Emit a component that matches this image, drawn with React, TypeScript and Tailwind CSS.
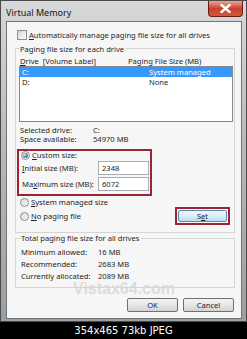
import React from "react";

const ui = "font-['Noto_Sans',sans-serif] text-[7.6px] leading-[9px] text-[#1e1e1e]";

function Radio({ checked }: { checked?: boolean }) {
  return (
    <span className="flex h-[9px] w-[9px] shrink-0 items-center justify-center rounded-full border border-[#8d8d8d] bg-gradient-to-br from-[#d9d9d9] to-[#fbfbfb]">
      {checked && (
        <span className="h-[5px] w-[5px] rounded-full bg-[radial-gradient(circle_at_35%_35%,#c4e6f7,#2d6f96_70%)]" />
      )}
    </span>
  );
}

function Field({ value }: { value: string }) {
  return (
    <div className="ml-auto flex h-[14px] w-[51px] items-center border border-[#a9acb3] bg-white pl-[3px]">
      {value}
    </div>
  );
}

function Row({ label, value, h = "h-[9px]", w = "w-[77px]" }: { label: string; value: string; h?: string; w?: string }) {
  return (
    <div className={`flex ${h} items-center`}>
      <span className={`${w} shrink-0`}>{label}</span>
      <span>{value}</span>
    </div>
  );
}

function WinButton({ children }: { children: React.ReactNode }) {
  return (
    <div className="flex h-[14px] w-[51px] items-center justify-center rounded-[2px] border border-[#707070] bg-gradient-to-b from-[#f3f3f3] via-[#e6e6e6] to-[#d2d2d2]">
      {children}
    </div>
  );
}

export default function App() {
  return (
    <div className="flex h-[339px] w-[247px] flex-col overflow-hidden bg-black">
      {/* window frame */}
      <div className="flex h-[322px] flex-col border border-[#4a4a4a] bg-gradient-to-b from-[#d6d8da] via-[#b4b7ba] to-[#9c9fa2]">
        {/* title bar */}
        <div className="flex h-[20px] shrink-0 items-start">
          <span className="mt-[6px] pl-[5px] font-['Noto_Sans',sans-serif] text-[9px] leading-[11px] text-[#151515]">
            Virtual Memory
          </span>
          <div className="ml-auto mr-[3px] flex h-[16px] w-[35px] items-center justify-center rounded-b-[4px] border border-t-0 border-[#6b1d14] bg-gradient-to-b from-[#e9a596] via-[#c8412d] to-[#d5563c]">
            <svg width="11" height="9" viewBox="0 0 11 9">
              <path d="M1.5 1 L9.5 8 M9.5 1 L1.5 8" stroke="#fff" strokeWidth="2.4" strokeLinecap="square" />
            </svg>
          </div>
        </div>

        {/* client area */}
        <div className={`relative ml-[5px] mr-[4px] flex h-[298px] flex-col border border-[#6f7478] bg-[#f6f6f6] pl-[8px] pr-[6px] ${ui}`}>
          {/* auto-manage checkbox */}
          <div className="mt-[8px] flex h-[10px] items-center">
            <span className="ml-[2px] h-[10px] w-[10px] shrink-0 border border-[#8d8d8d] bg-gradient-to-br from-[#d5d5d5] to-[#fdfdfd]" />
            <span className="ml-[2px]">
              <u>A</u>utomatically manage paging file size for all drives
            </span>
          </div>

          {/* group: paging file size for each drive */}
          <div className="mt-[8px] flex h-[185px] flex-col border border-[#d5d5d5] pl-[4px] pr-[2px]">
            <div className="-mt-[5px] flex h-[10px] items-center">
              <span className="bg-[#f6f6f6] pr-[2px]">Paging file size for each drive</span>
            </div>
            <div className="mt-[2px] flex h-[10px] items-center">
              <span className="w-[108px] shrink-0">
                <u>D</u>rive&nbsp;&nbsp;[Volume Label]
              </span>
              <span>Paging File Size (MB)</span>
            </div>
            <div className="-ml-[1px] h-[56px] w-[214px] border border-[#828790] bg-white">
              <div className="flex h-[10px] items-center bg-[#3399ff] pl-[2px] text-white">
                <span className="w-[127px] shrink-0">C:</span>
                <span>System managed</span>
              </div>
              <div className="flex h-[10px] items-center pl-[2px]">
                <span className="w-[127px] shrink-0">D:</span>
                <span>None</span>
              </div>
            </div>

            <div className="mt-[4px]">
              <Row label="Selected drive:" value="C:" w="w-[73px]" />
              <Row label="Space available:" value="54970 MB" w="w-[73px]" />
            </div>

            {/* highlighted custom-size box */}
            <div className="-ml-[3px] mt-[5px] flex h-[47px] w-[135px] flex-col border-2 border-[#9d2436] pl-[3px] pr-[1px]">
              <div className="-ml-[1px] flex h-[9px] items-center">
                <Radio checked />
                <span className="ml-[2px]">
                  <u>C</u>ustom size:
                </span>
              </div>
              <div className="mt-[1px] flex h-[14px] items-center">
                <span>
                  <u>I</u>nitial size (MB):
                </span>
                <Field value="2348" />
              </div>
              <div className="mt-[2px] flex h-[14px] items-center">
                <span>
                  Ma<u>x</u>imum size (MB):
                </span>
                <Field value="6072" />
              </div>
            </div>

            <div className="flex">
              <div className="flex flex-col">
                <div className="mt-[1px] flex h-[10px] items-center">
                  <Radio />
                  <span className="ml-[2px]">
                    <u>S</u>ystem managed size
                  </span>
                </div>
                <div className="mt-[4px] flex h-[10px] items-center">
                  <Radio />
                  <span className="ml-[2px]">
                    <u>N</u>o paging file
                  </span>
                </div>
              </div>
              <div className="ml-auto mr-[2px] mt-[11px] flex h-[18px] w-[55px] items-center justify-center border-2 border-[#9d2436]">
                <div className="flex h-[12px] w-[49px] items-center justify-center rounded-[2px] border border-[#5a8fae] bg-gradient-to-b from-[#eef7fc] via-[#d9eef9] to-[#bcdcee]">
                  S<u>e</u>t
                </div>
              </div>
            </div>
          </div>

          {/* group: totals */}
          <div className="mt-[5px] flex h-[50px] flex-col border border-[#d5d5d5] pl-[5px]">
            <div className="-mt-[6px] flex h-[10px] items-center">
              <span className="bg-[#f6f6f6] pr-[2px]">Total paging file size for all drives</span>
            </div>
            <div className="mt-[3px]">
              <Row label="Minimum allowed:" value="16 MB" h="h-[12px]" />
              <Row label="Recommended:" value="2683 MB" h="h-[12.5px]" />
              <Row label="Currently allocated:" value="2089 MB" h="h-[12.5px]" />
            </div>
          </div>

          <div className="mt-[10px] flex justify-end gap-[5px] pr-[1px]">
            <WinButton>OK</WinButton>
            <WinButton>Cancel</WinButton>
          </div>

          <div className="pointer-events-none absolute left-0 right-0 top-[258px] text-center font-['Liberation_Sans',sans-serif] text-[16px] font-bold leading-[17px] text-[#d4d4d4]/75">
            Vistax64.com
          </div>
        </div>
      </div>

      {/* image info bar */}
      <div className="flex h-[17px] items-center justify-center font-['DejaVu_Sans',sans-serif] text-[10px] text-white">
        354x465 73kb JPEG
      </div>
    </div>
  );
}
